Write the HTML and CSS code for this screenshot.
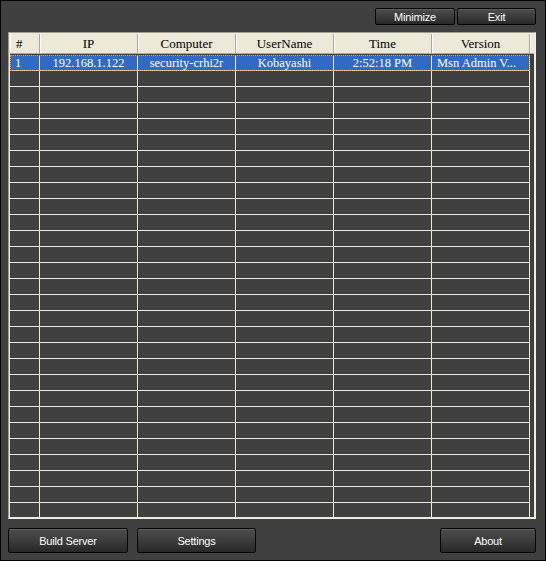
FILE: index.html
```html
<!DOCTYPE html>
<html>
<head>
<meta charset="utf-8">
<title>Msn Admin</title>
<link rel="stylesheet" href="styles.css">
</head>
<body>
<div class="window">
  <div class="topbar">
    <button class="btn btn-min">Minimize</button>
    <button class="btn btn-exit">Exit</button>
  </div>
  <div class="frame">
    <div class="frame-inner">
      <div class="head">
        <div class="hc c0 left">#</div>
        <div class="hc c">IP</div>
        <div class="hc c">Computer</div>
        <div class="hc c">UserName</div>
        <div class="hc c">Time</div>
        <div class="hc c">Version</div>
        <div class="hc filler"></div>
      </div>
      <div class="rows">
        <div class="row sel"><div class="cell c0 left">1</div><div class="cell c">192.168.1.122</div><div class="cell c">security-crhi2r</div><div class="cell c">Kobayashi</div><div class="cell c">2:52:18 PM</div><div class="cell c left v">Msn Admin V...</div></div>
        <div class="row"><div class="cell c0"></div><div class="cell c"></div><div class="cell c"></div><div class="cell c"></div><div class="cell c"></div><div class="cell c"></div></div>
        <div class="row"><div class="cell c0"></div><div class="cell c"></div><div class="cell c"></div><div class="cell c"></div><div class="cell c"></div><div class="cell c"></div></div>
        <div class="row"><div class="cell c0"></div><div class="cell c"></div><div class="cell c"></div><div class="cell c"></div><div class="cell c"></div><div class="cell c"></div></div>
        <div class="row"><div class="cell c0"></div><div class="cell c"></div><div class="cell c"></div><div class="cell c"></div><div class="cell c"></div><div class="cell c"></div></div>
        <div class="row"><div class="cell c0"></div><div class="cell c"></div><div class="cell c"></div><div class="cell c"></div><div class="cell c"></div><div class="cell c"></div></div>
        <div class="row"><div class="cell c0"></div><div class="cell c"></div><div class="cell c"></div><div class="cell c"></div><div class="cell c"></div><div class="cell c"></div></div>
        <div class="row"><div class="cell c0"></div><div class="cell c"></div><div class="cell c"></div><div class="cell c"></div><div class="cell c"></div><div class="cell c"></div></div>
        <div class="row"><div class="cell c0"></div><div class="cell c"></div><div class="cell c"></div><div class="cell c"></div><div class="cell c"></div><div class="cell c"></div></div>
        <div class="row"><div class="cell c0"></div><div class="cell c"></div><div class="cell c"></div><div class="cell c"></div><div class="cell c"></div><div class="cell c"></div></div>
        <div class="row"><div class="cell c0"></div><div class="cell c"></div><div class="cell c"></div><div class="cell c"></div><div class="cell c"></div><div class="cell c"></div></div>
        <div class="row"><div class="cell c0"></div><div class="cell c"></div><div class="cell c"></div><div class="cell c"></div><div class="cell c"></div><div class="cell c"></div></div>
        <div class="row"><div class="cell c0"></div><div class="cell c"></div><div class="cell c"></div><div class="cell c"></div><div class="cell c"></div><div class="cell c"></div></div>
        <div class="row"><div class="cell c0"></div><div class="cell c"></div><div class="cell c"></div><div class="cell c"></div><div class="cell c"></div><div class="cell c"></div></div>
        <div class="row"><div class="cell c0"></div><div class="cell c"></div><div class="cell c"></div><div class="cell c"></div><div class="cell c"></div><div class="cell c"></div></div>
        <div class="row"><div class="cell c0"></div><div class="cell c"></div><div class="cell c"></div><div class="cell c"></div><div class="cell c"></div><div class="cell c"></div></div>
        <div class="row"><div class="cell c0"></div><div class="cell c"></div><div class="cell c"></div><div class="cell c"></div><div class="cell c"></div><div class="cell c"></div></div>
        <div class="row"><div class="cell c0"></div><div class="cell c"></div><div class="cell c"></div><div class="cell c"></div><div class="cell c"></div><div class="cell c"></div></div>
        <div class="row"><div class="cell c0"></div><div class="cell c"></div><div class="cell c"></div><div class="cell c"></div><div class="cell c"></div><div class="cell c"></div></div>
        <div class="row"><div class="cell c0"></div><div class="cell c"></div><div class="cell c"></div><div class="cell c"></div><div class="cell c"></div><div class="cell c"></div></div>
        <div class="row"><div class="cell c0"></div><div class="cell c"></div><div class="cell c"></div><div class="cell c"></div><div class="cell c"></div><div class="cell c"></div></div>
        <div class="row"><div class="cell c0"></div><div class="cell c"></div><div class="cell c"></div><div class="cell c"></div><div class="cell c"></div><div class="cell c"></div></div>
        <div class="row"><div class="cell c0"></div><div class="cell c"></div><div class="cell c"></div><div class="cell c"></div><div class="cell c"></div><div class="cell c"></div></div>
        <div class="row"><div class="cell c0"></div><div class="cell c"></div><div class="cell c"></div><div class="cell c"></div><div class="cell c"></div><div class="cell c"></div></div>
        <div class="row"><div class="cell c0"></div><div class="cell c"></div><div class="cell c"></div><div class="cell c"></div><div class="cell c"></div><div class="cell c"></div></div>
        <div class="row"><div class="cell c0"></div><div class="cell c"></div><div class="cell c"></div><div class="cell c"></div><div class="cell c"></div><div class="cell c"></div></div>
        <div class="row"><div class="cell c0"></div><div class="cell c"></div><div class="cell c"></div><div class="cell c"></div><div class="cell c"></div><div class="cell c"></div></div>
        <div class="row"><div class="cell c0"></div><div class="cell c"></div><div class="cell c"></div><div class="cell c"></div><div class="cell c"></div><div class="cell c"></div></div>
        <div class="row"><div class="cell c0"></div><div class="cell c"></div><div class="cell c"></div><div class="cell c"></div><div class="cell c"></div><div class="cell c"></div></div>
        <div class="row"><div class="cell c0"></div><div class="cell c"></div><div class="cell c"></div><div class="cell c"></div><div class="cell c"></div><div class="cell c"></div></div>
      </div>
    </div>
  </div>
  <div class="bottombar">
    <button class="btn btn-build">Build Server</button>
    <button class="btn btn-set">Settings</button>
    <button class="btn btn-about">About</button>
  </div>
</div>
</body>
</html>
```
FILE: styles.css
```css
* { box-sizing: border-box; }
html, body { margin: 0; padding: 0; background: #000; }

.window {
  width: 546px;
  height: 561px;
  border: 1px solid #000;
  background: #404040;
  padding: 7px 9px 7px 7px;
  display: flex;
  flex-direction: column;
  overflow: hidden;
}

.topbar {
  display: flex;
  justify-content: flex-end;
  gap: 2px;
  height: 17px;
  flex: none;
}

.btn {
  font-family: "Liberation Sans", Arial, sans-serif;
  font-size: 11px;
  letter-spacing: -0.2px;
  color: #fff;
  border: 1px solid #050505;
  border-radius: 2px;
  background: linear-gradient(#4e4e4e, #3c3c3c 50%, #282828);
  box-shadow: inset 0 1px 0 #5e5e5e;
  display: flex;
  align-items: center;
  justify-content: center;
  padding: 0;
  margin: 0;
  height: 100%;
}
.btn-min { width: 80px; }
.btn-exit { width: 79px; }

.frame {
  margin-top: 7px;
  height: 487px;
  flex: none;
  border: 1px solid;
  border-color: #9d9a8e #f3efe0 #f3efe0 #9d9a8e;
}
.frame-inner {
  height: 100%;
  border: 1px solid #efebdc;
  background: #404040;
  overflow: hidden;
}

.head {
  display: flex;
  height: 20px;
}
.hc {
  background: #ece9d8;
  border-right: 1px solid #aca899;
  border-bottom: 1px solid #aca899;
  box-shadow: inset 1px 0 #ffffff;
  font-family: "Liberation Serif", "Times New Roman", serif;
  font-size: 13px;
  line-height: 20px;
  color: #000;
  text-align: center;
  white-space: nowrap;
  overflow: hidden;
}
.hc.left { text-align: left; padding-left: 6px; }
.hc.filler { flex: 1; border-right: none; }

.c0 { width: 30px; flex: none; }
.c { width: 98px; flex: none; }

.rows {
  margin-top: 1px;
  width: 520px;
}
.row {
  display: flex;
  height: 16px;
}
.cell {
  border-right: 1px solid #efe9d6;
  border-bottom: 1px solid #efe9d6;
  font-family: "Liberation Serif", "Times New Roman", serif;
  font-size: 12.5px;
  line-height: 16px;
  color: #fff;
  text-align: center;
  white-space: nowrap;
  overflow: hidden;
}
.cell.left { text-align: left; padding-left: 5px; }

.row.sel {
  background: #316ac5;
  outline: 1px dotted #e49a3c;
  outline-offset: -1px;
}

.bottombar {
  margin-top: 9px;
  height: 25px;
  flex: none;
  display: flex;
}
.btn-build { width: 120px; }
.btn-set { width: 119px; margin-left: 9px; }
.btn-about { width: 96px; margin-left: auto; }
```
